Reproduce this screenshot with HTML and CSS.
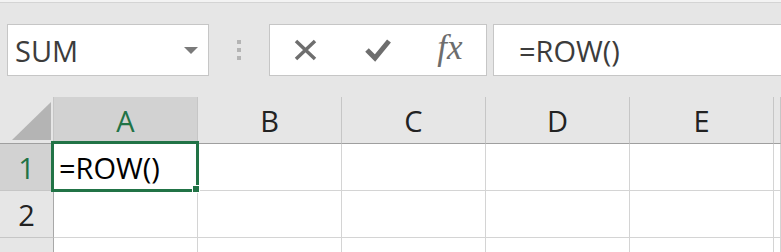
FILE: index.html
```html
<!DOCTYPE html>
<html lang="ja">
<head>
  <meta charset="UTF-8">
  <title>Excel ROW</title>
  <link rel="stylesheet" href="styles.css">
</head>
<body>

<div class="topline"></div>

<div class="toolbar">
  <div class="namebox">
    <span class="namebox-text">SUM</span>
    <span class="arrow"></span>
  </div>
  <div class="grip">
    <span class="dot"></span>
    <span class="dot"></span>
    <span class="dot"></span>
  </div>
  <div class="fxbar">
    <div class="fxbtn">
      <svg width="24" height="24" viewBox="0 0 24 24">
        <path d="M2 3 L21 21 M21 3 L2 21" stroke="#6e6e6e" stroke-width="3.5" fill="none"/>
      </svg>
    </div>
    <div class="fxbtn">
      <svg width="26" height="24" viewBox="0 0 26 24">
        <polyline points="2,12 10,20 24,3" stroke="#6e6e6e" stroke-width="5" fill="none"/>
      </svg>
    </div>
    <div class="fxbtn"><span class="fx">fx</span></div>
  </div>
  <div class="formula">=ROW()</div>
</div>

<div class="sheet">
  <div class="cell corner"><span class="tri"></span></div>
  <div class="cell colhead sel">A</div>
  <div class="cell colhead">B</div>
  <div class="cell colhead">C</div>
  <div class="cell colhead">D</div>
  <div class="cell colhead">E</div>
  <div class="cell colhead"></div>

  <div class="cell rowhead sel">1</div>
  <div class="cell active">=ROW()</div>
  <div class="cell"></div>
  <div class="cell"></div>
  <div class="cell"></div>
  <div class="cell"></div>
  <div class="cell"></div>

  <div class="cell rowhead">2</div>
  <div class="cell"></div>
  <div class="cell"></div>
  <div class="cell"></div>
  <div class="cell"></div>
  <div class="cell"></div>
  <div class="cell"></div>

  <div class="cell rowhead">3</div>
  <div class="cell"></div>
  <div class="cell"></div>
  <div class="cell"></div>
  <div class="cell"></div>
  <div class="cell"></div>
  <div class="cell"></div>
</div>

</body>
</html>
```

FILE: styles.css
```css
body {
  margin: 0;
  background-color: #e6e6e6;
  font-family: "Open Sans", "Noto Sans", sans-serif;
  overflow: hidden;
}

.topline {
  height: 2px;
  background-color: #f3f3f3;
  border-bottom: 1px solid #d4d4d4;
}

.toolbar {
  display: flex;
  height: 52px;
  padding: 21px 0 21px 7px;
}

.namebox {
  width: 202px;
  box-sizing: border-box;
  border: 1px solid #c6c6c6;
  background-color: #fff;
  display: flex;
  align-items: center;
  justify-content: space-between;
  padding: 0 10px 0 7px;
}

.namebox-text {
  font-size: 29px;
  color: #3c3c3c;
}

.arrow {
  width: 0;
  height: 0;
  border-left: 7px solid transparent;
  border-right: 7px solid transparent;
  border-top: 7px solid #7a7a7a;
}

.grip {
  width: 60px;
  display: flex;
  flex-direction: column;
  align-items: center;
  justify-content: center;
  gap: 4px;
}

.dot {
  width: 4px;
  height: 4px;
  background-color: #b4b4b4;
}

.fxbar {
  width: 218px;
  box-sizing: border-box;
  border: 1px solid #c6c6c6;
  background-color: #fff;
  display: flex;
}

.fxbtn {
  width: 72px;
  display: flex;
  align-items: center;
  justify-content: center;
}

.fx {
  font-family: "Liberation Serif", serif;
  font-style: italic;
  font-size: 35px;
  color: #6d6d6d;
  margin-top: -4px;
}

.formula {
  flex: 1;
  margin-left: 6px;
  margin-right: -2px;
  border: 1px solid #c6c6c6;
  background-color: #fff;
  display: flex;
  align-items: center;
  padding-left: 25px;
  font-size: 29px;
  color: #3c3c3c;
}

.sheet {
  display: grid;
  grid-template-columns: 54px repeat(5, 144px) 1fr;
  grid-template-rows: repeat(4, 47px);
}

.cell {
  box-sizing: border-box;
  background-color: #fff;
  border-right: 1px solid #d4d4d4;
  border-bottom: 1px solid #d4d4d4;
  display: flex;
  align-items: center;
  padding-left: 5px;
  font-size: 29px;
  color: #000;
}

.colhead {
  background-color: #e6e6e6;
  border-right-color: #c6c6c6;
  border-bottom-color: #9f9f9f;
  justify-content: center;
  padding-left: 0;
  color: #222;
}

.rowhead {
  background-color: #e6e6e6;
  border-right-color: #a8a8a8;
  border-bottom-color: #c6c6c6;
  justify-content: center;
  padding-left: 0;
  color: #222;
}

.sel {
  background-color: #d2d2d2;
  color: #217346;
}

.corner {
  background-color: #e6e6e6;
  border-right-color: #c6c6c6;
  border-bottom-color: #9f9f9f;
  align-items: flex-end;
  justify-content: flex-end;
  padding: 0 2px 3px 0;
}

.tri {
  width: 0;
  height: 0;
  border-left: 39px solid transparent;
  border-bottom: 38px solid #b4b4b4;
}

.active {
  position: relative;
}

.active::after {
  content: "";
  position: absolute;
  top: -3px;
  left: -3px;
  right: -2px;
  bottom: -2px;
  border: 3px solid #217346;
}

.active::before {
  content: "";
  position: absolute;
  right: -3px;
  bottom: -3px;
  width: 6px;
  height: 6px;
  background-color: #217346;
  border: 1px solid #fff;
  z-index: 1;
}
```
